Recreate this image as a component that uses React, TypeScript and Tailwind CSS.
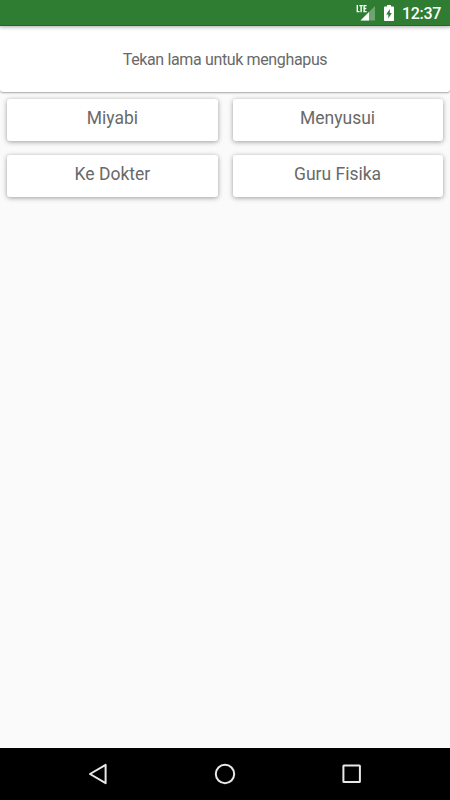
const items = ["Miyabi", "Menyusui", "Ke Dokter", "Guru Fisika"];

function StatusBar() {
  return (
    <div className="relative z-10 h-[26px] shrink-0 bg-[#2e7d32] border-b border-[#15701a] shadow-[0_1px_4px_rgba(0,0,0,0.35)] flex items-start justify-end pr-[9px] text-white">
      <svg className="mt-[4px]" width="20" height="18" viewBox="0 0 20 18">
        <path d="M19 2v14.5H4.5z" fill="#fff" fillOpacity="0.3" />
        <path d="M13 8v8.5H4.5z" fill="#fff" />
        <path
          d="M1.3 1v6.6h2.2M3.4 1.6h3.4M5.1 1.6v6.6M10.6 1.6H8.1v6h2.5M8.1 4.5h2.2"
          fill="none"
          stroke="#fff"
          strokeWidth="1.4"
        />
      </svg>
      <svg className="mt-[5px] ml-[8px]" width="10" height="16" viewBox="0 0 10 16">
        <path
          fillRule="evenodd"
          d="M3 0h4v1.6h2.2c.5 0 .8.3.8.8v12.8c0 .5-.3.8-.8.8H.8c-.5 0-.8-.3-.8-.8V2.4c0-.5.3-.8.8-.8H3zM5.8 4 2.2 9.6h2.1v4L7.8 8H5.8z"
          fill="#fff"
        />
      </svg>
      <span className="ml-[8px] mt-[4px] text-[16px] leading-[20px] font-medium tracking-[-0.3px]">12:37</span>
    </div>
  );
}

function Header() {
  return (
    <div className="h-[66px] shrink-0 rounded-[3px] bg-white shadow-[0_1px_2px_rgba(0,0,0,0.35)] flex items-center justify-center">
      <p className="text-[16px] leading-[20px] tracking-[-0.36px] text-[#696969] pt-[2px]">Tekan lama untuk menghapus</p>
    </div>
  );
}

function NavBar() {
  return (
    <div className="h-[52px] shrink-0 bg-black flex items-center justify-center gap-[102px]">
      <svg width="24" height="24" viewBox="0 0 24 24">
        <path d="M18.6 2.8v18.4L3 12z" fill="none" stroke="#e8e8e8" strokeWidth="2" strokeLinejoin="round" />
      </svg>
      <svg width="24" height="24" viewBox="0 0 24 24">
        <circle cx="12" cy="12" r="9.2" fill="none" stroke="#e8e8e8" strokeWidth="2" />
      </svg>
      <svg width="24" height="24" viewBox="0 0 24 24">
        <rect x="4.4" y="3.6" width="16.5" height="16.5" rx="0.5" fill="none" stroke="#e8e8e8" strokeWidth="2" />
      </svg>
    </div>
  );
}

export default function App() {
  return (
    <div className="w-[450px] h-[800px] overflow-hidden flex flex-col bg-[#fafafa] font-[Roboto,sans-serif]">
      <StatusBar />
      <Header />

      {/* Cards */}
      <div className="flex-1 grid grid-cols-2 content-start gap-x-[15px] gap-y-[14.4px] px-[7.4px] pt-[7px]">
        {items.map((item) => (
          <div
            key={item}
            className="h-[42px] rounded-[3px] bg-white shadow-[0_1px_5px_rgba(0,0,0,0.38)] text-center text-[17.5px] leading-[21px] pt-[9px] text-[#696969]"
          >
            {item}
          </div>
        ))}
      </div>

      <NavBar />
    </div>
  );
}
